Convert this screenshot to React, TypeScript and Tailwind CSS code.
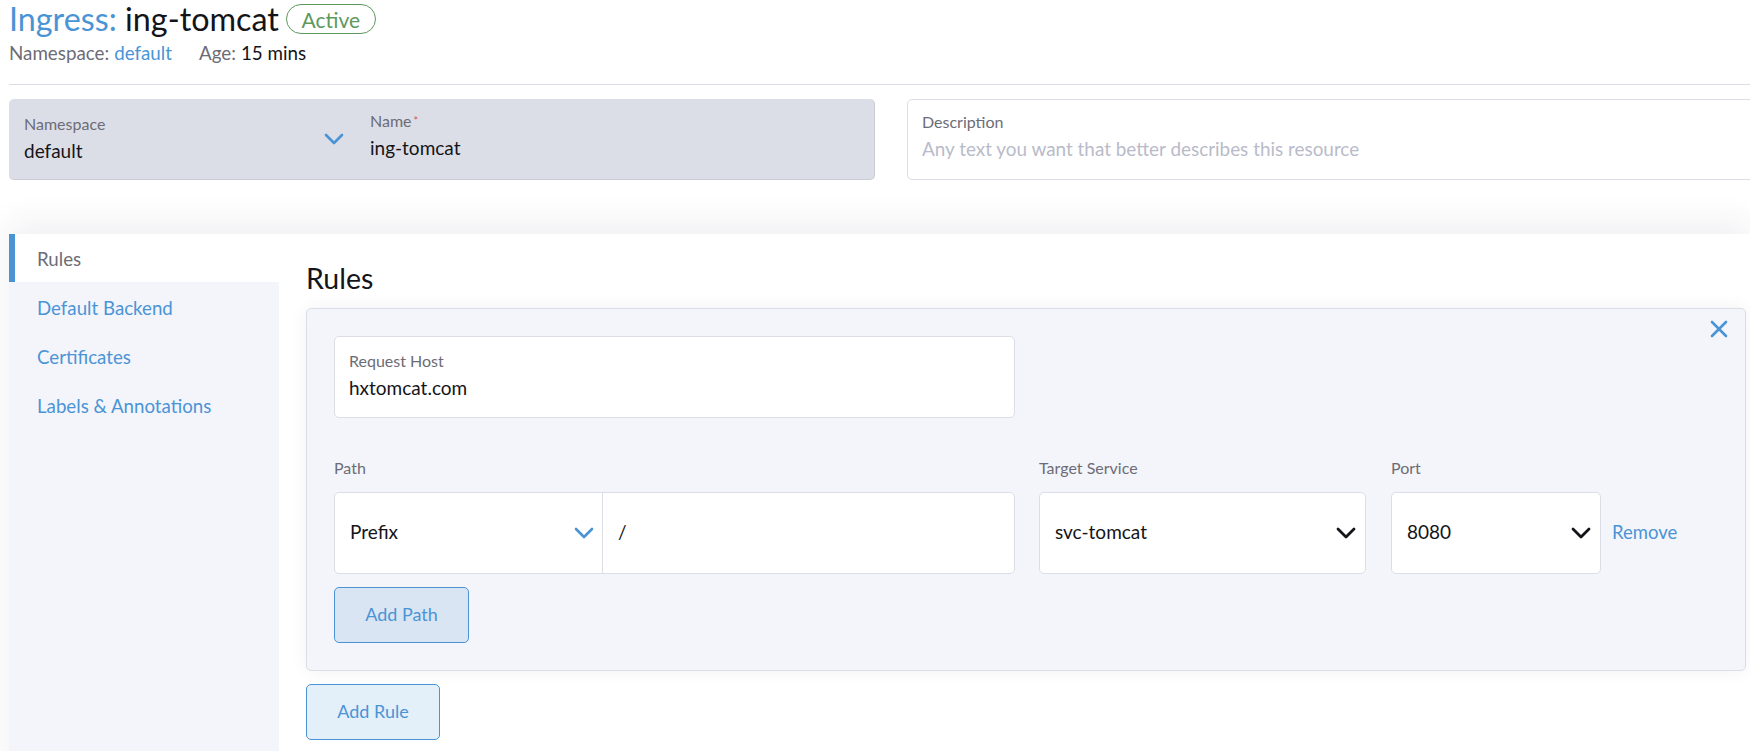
import React from "react";

const BlueChevron = () => (
  <svg width="20" height="12" viewBox="0 0 20 12" fill="none">
    <polyline points="2,2 10,10 18,2" stroke="#4a94d6" strokeWidth="2.6" strokeLinecap="round" strokeLinejoin="round" />
  </svg>
);

const BlackChevron = () => (
  <svg width="20" height="12" viewBox="0 0 20 12" fill="none">
    <polyline points="2,2 10,10 18,2" stroke="#141419" strokeWidth="2.8" strokeLinecap="round" strokeLinejoin="round" />
  </svg>
);

export default function App() {
  return (
    <div className="w-[1750px] h-[751px] overflow-hidden bg-white font-['Lato','Noto_Sans',sans-serif] text-[#141419]">
      {/* Header */}
      <div className="pl-[9px]">
        <div className="flex items-center h-[38px]">
          <h1 className="text-[32.3px] leading-[38px]">
            <span className="text-[#4a94d6]">Ingress:</span> <span>ing-tomcat</span>
          </h1>
          <span className="ml-[7px] inline-flex items-center justify-center h-[30px] w-[90px] rounded-full border border-[#5d995d] text-[#5d995d] text-[21px] leading-none">
            Active
          </span>
        </div>
        <div className="flex items-center h-[30px] text-[18.8px]">
          <span className="text-[#6c6c76]">Namespace:</span>
          <span className="ml-[5px] text-[#4a94d6]">default</span>
          <span className="ml-[27px] text-[#6c6c76]">Age:</span>
          <span className="ml-[5px]">15 mins</span>
        </div>
        <div className="mt-[16px] h-px bg-[#dcdee7]" />

        {/* Form row */}
        <div className="mt-[14px] flex h-[81px]">
          <div className="flex w-[866px] rounded-[5px] bg-[#dcdee7] border-r border-b border-[#c9cbd6]">
            <div className="relative w-[347px] pl-[15px] pt-[15px]">
              <div className="text-[16px] text-[#6c6c76] leading-[20px]">Namespace</div>
              <div className="text-[19px] leading-[24px] mt-[5px]">default</div>
              <div className="absolute left-[315px] top-[34px]">
                <BlueChevron />
              </div>
            </div>
            <div className="flex-1 pl-[14px] pt-[12px]">
              <div className="text-[16px] text-[#6c6c76] leading-[20px]">
                Name<span className="text-[#d9534f] align-top text-[11px] ml-[2px]">*</span>
              </div>
              <div className="text-[19px] leading-[24px] mt-[5px]">ing-tomcat</div>
            </div>
          </div>
          <div className="ml-[32px] flex-1 rounded-[5px] border border-[#dcdee7] pl-[14px] pt-[12px] -mr-[20px]">
            <div className="text-[16px] text-[#6c6c76] leading-[20px]">Description</div>
            <div className="text-[18.9px] leading-[24px] mt-[5px] text-[#b9bbc9]">
              Any text you want that better describes this resource
            </div>
          </div>
        </div>

        {/* Tabbed section */}
        <div className="mt-[54px] flex h-[600px] bg-white shadow-[0_-12px_30px_rgba(40,40,80,0.07)]">
          <div className="w-[270px] bg-[#f4f5fa] flex flex-col text-[18.7px]">
            <div className="h-[48px] bg-white border-l-[6px] border-[#4a94d6] pl-[22px] pt-[3px] flex items-center text-[#6c6c76]">Rules</div>
            <div className="h-[49px] pl-[28px] pt-[4px] flex items-center text-[#4a94d6]">Default Backend</div>
            <div className="h-[49px] pl-[28px] pt-[4px] flex items-center text-[#4a94d6]">Certificates</div>
            <div className="h-[49px] pl-[28px] pt-[4px] flex items-center text-[#4a94d6]">Labels &amp; Annotations</div>
          </div>
          <div className="flex-1 pl-[27px]">
            <h2 className="text-[28.5px] leading-none mt-[30px]">Rules</h2>
            <div className="mt-[15px] relative w-[1440px] h-[363px] rounded-[5px] border border-[#dcdee7] bg-[#f4f5fa] shadow-[0_0_18px_rgba(40,40,80,0.06)] pl-[27px] pt-[27px]">
              <div className="absolute right-[17px] top-[11px]">
                <svg width="18" height="18" viewBox="0 0 18 18" fill="none">
                  <path d="M2 2 L16 16 M16 2 L2 16" stroke="#4a94d6" strokeWidth="2.6" strokeLinecap="round" />
                </svg>
              </div>
              <div className="w-[681px] h-[82px] rounded-[5px] border border-[#dcdee7] bg-white pl-[14px] pt-[14px]">
                <div className="text-[16px] text-[#6c6c76] leading-[20px]">Request Host</div>
                <div className="text-[19px] leading-[24px] mt-[5px]">hxtomcat.com</div>
              </div>

              <div className="mt-[40px] flex items-start">
                <div className="w-[681px]">
                  <div className="text-[16px] text-[#6c6c76] leading-[20px]">Path</div>
                  <div className="mt-[14px] h-[82px] flex rounded-[5px] border border-[#dcdee7] bg-white">
                    <div className="relative w-[268px] border-r border-[#dcdee7] pl-[15px] flex items-center text-[19px]">
                      Prefix
                      <div className="absolute left-[239px] top-[34px]">
                        <BlueChevron />
                      </div>
                    </div>
                    <div className="flex-1 pl-[15px] flex items-center text-[19px]">/</div>
                  </div>
                </div>
                <div className="ml-[24px] w-[327px]">
                  <div className="text-[16px] text-[#6c6c76] leading-[20px]">Target Service</div>
                  <div className="mt-[14px] h-[82px] rounded-[5px] border border-[#dcdee7] bg-white pl-[15px] pr-[9px] flex items-center justify-between text-[19px]">
                    <span>svc-tomcat</span>
                    <BlackChevron />
                  </div>
                </div>
                <div className="ml-[25px] w-[210px]">
                  <div className="text-[16px] text-[#6c6c76] leading-[20px]">Port</div>
                  <div className="mt-[14px] h-[82px] rounded-[5px] border border-[#dcdee7] bg-white pl-[15px] pr-[9px] flex items-center justify-between text-[19px]">
                    <span>8080</span>
                    <BlackChevron />
                  </div>
                </div>
                <div className="ml-[11px] mt-[34px] h-[82px] flex items-center text-[18.5px] text-[#4a94d6]">Remove</div>
              </div>

              <button className="mt-[13px] w-[135px] h-[56px] rounded-[5px] border border-[#4a94d6] bg-[#d9e5f2] text-[18px] text-[#4a94d6]">
                Add Path
              </button>
            </div>
            <button className="mt-[13px] w-[134px] h-[56px] rounded-[5px] border border-[#4a94d6] bg-[#e3eff9] text-[18px] text-[#4a94d6]">
              Add Rule
            </button>
          </div>
        </div>
      </div>
    </div>
  );
}
